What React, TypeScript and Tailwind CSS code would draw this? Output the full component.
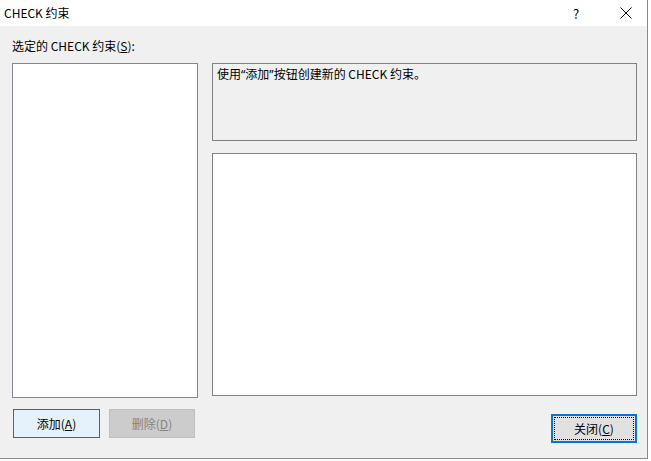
import React from "react";

const font = { fontFamily: '"Noto Sans CJK SC", "Noto Sans", sans-serif' };

export default function App() {
  return (
    <div className="w-[651px] h-[461px] bg-white text-[12px] text-black" style={font}>
      <div className="w-[648px] h-[459px] flex flex-col border-r border-b border-[#8a8a8a]">
        <div className="h-[26px] bg-white flex items-center shrink-0">
          <span className="pl-[4px] leading-none">CHECK 约束</span>
          <div className="flex-1" />
          <span className="w-[12px] text-center mr-[38px] text-[13px] leading-none">?</span>
          <svg width="12" height="12" viewBox="0 0 12 12" className="mr-[15px]">
            <path d="M0.5 0.5 L11.5 11.5 M11.5 0.5 L0.5 11.5" stroke="#000" strokeWidth="1" />
          </svg>
        </div>
        <div className="flex-1 bg-[#f0f0f0] pl-[12px] pt-[11px]">
          <div className="h-[18px] leading-[18px]">
            选定的 CHECK 约束(<span className="underline">S</span>):
          </div>
          <div className="flex mt-[8px] gap-[14px]">
            <div className="w-[186px] flex flex-col">
              <div className="h-[335px] bg-white border border-[#828790]" />
              <div className="flex gap-[9px] mt-[11px] pl-[1px]">
                <button className="w-[87px] h-[29px] bg-[#e5f1fb] border border-[#0078d7] flex items-center justify-center">
                  添加(<span className="underline">A</span>)
                </button>
                <button className="w-[86px] h-[29px] bg-[#cccccc] border border-[#bfbfbf] text-[#838383] flex items-center justify-center">
                  删除(<span className="underline">D</span>)
                </button>
              </div>
            </div>
            <div className="w-[425px] flex flex-col">
              <div className="h-[78px] bg-[#f0f0f0] border border-[#828282] px-[4px] pt-[2px] leading-[16px]">
                使用<span className="font-['Noto_Sans',sans-serif]">“</span>添加<span className="font-['Noto_Sans',sans-serif]">”</span>按钮创建新的 CHECK 约束。
              </div>
              <div className="h-[243px] bg-white border border-[#828282] mt-[12px]" />
              <div className="flex justify-end mt-[18px]">
                <button className="w-[86px] h-[29px] bg-[#e1e1e1] border-2 border-[#0078d7] p-[1px] flex">
                  <span className="flex-1 border border-dotted border-black flex items-center justify-center">
                    关闭(<span className="underline">C</span>)
                  </span>
                </button>
              </div>
            </div>
          </div>
        </div>
      </div>
    </div>
  );
}
